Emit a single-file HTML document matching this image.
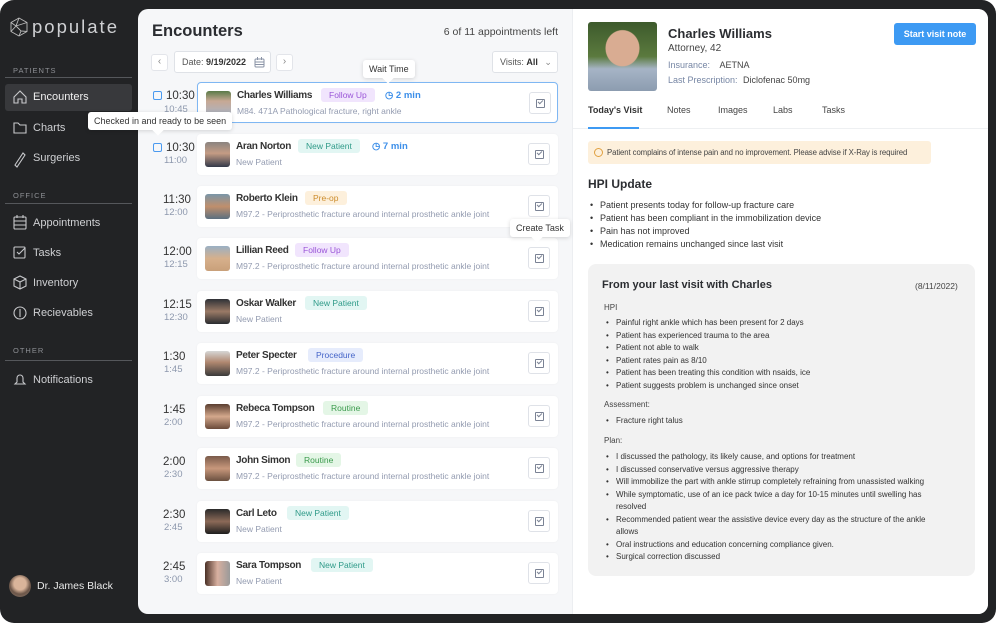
<!DOCTYPE html>
<html><head><meta charset="utf-8"><style>
*{margin:0;padding:0;box-sizing:border-box}
body{width:996px;height:623px;background:#fff;font-family:"Liberation Sans",sans-serif;position:relative;overflow:hidden}
.frame{position:absolute;left:0;top:0;width:996px;height:623px;background:#222325;border-radius:14px}
.a{position:absolute;white-space:nowrap}
.side{color:#cfd0d3;font-size:11px}
.sec{color:#8d8f94;font-size:7.5px;letter-spacing:1px}
.line{position:absolute;left:5px;width:127px;height:1px;background:#55575b}
.main{position:absolute;left:138px;top:9px;width:850px;height:605px;background:#f6f7f9;border-radius:10px;overflow:hidden}
.right{position:absolute;left:434px;top:0;width:416px;height:605px;background:#fff;border-left:1px solid #eceef1}
.card{position:absolute;left:59px;width:361px;height:41px;background:#fff;border-radius:4px;box-shadow:0 0 2px rgba(0,0,0,.04)}
.t1{position:absolute;left:25px;font-size:11.5px;color:#333}
.t2{position:absolute;left:26px;font-size:9.5px;color:#8d98ad}
.av{position:absolute;left:8px;top:8px;width:25px;height:25px;border-radius:3px}
.nm{position:absolute;left:39px;top:7px;font-size:10px;font-weight:bold;color:#333;letter-spacing:-0.3px;white-space:nowrap}
.sub{position:absolute;left:39px;top:23px;font-size:8.5px;color:#939bb0;white-space:nowrap}
.tag{position:absolute;top:5px;font-size:8.5px;padding:2px 8px;border-radius:3px;white-space:nowrap}
.fu{background:#f1e5fd;color:#9a55d8}.np{background:#e2f6f3;color:#2e9a88}.po{background:#fdf0dc;color:#cc8c2c}.pr{background:#e6ecfc;color:#4464c8}.rt{background:#e4f6e6;color:#3a9a4c}
.btn{position:absolute;left:331px;top:9px;width:22px;height:22px;border:1px solid #dfe2e8;border-radius:3px;background:#fff}
.btn:after{content:"";position:absolute;left:6px;top:6px;width:7px;height:7px;border:1px solid #7a8294;border-radius:1px}
.btn:before{content:"";position:absolute;left:8px;top:7px;width:4px;height:2px;border-left:1px solid #7a8294;border-bottom:1px solid #7a8294;transform:rotate(-45deg);z-index:1}
.tip{position:absolute;background:#fff;font-size:9px;color:#333;padding:4px 6px;border-radius:3px;box-shadow:0 1px 4px rgba(0,0,0,.15);white-space:nowrap;z-index:5}
.tip i{position:absolute;bottom:-4px;width:8px;height:8px;background:#fff;transform:rotate(45deg)}
.chk{position:absolute;left:15px;width:9px;height:9px;border:1px solid #4a9af0;border-radius:2px}
ul{list-style:none}
.bl li{position:relative;padding-left:12px}
.bl li:before{content:"•";position:absolute;left:2px}
</style></head><body>
<div class="frame"></div>
<svg class="a" style="left:9px;top:17px" width="20" height="20" viewBox="0 0 20 20" fill="none" stroke="#bbb" stroke-width="0.9"><polygon points="10,1 18,5.5 18,14.5 10,19 2,14.5 2,5.5"/><path d="M10 1 7 9 2 14.5M7 9l11-3.5M7 9l5 5 6 .5M12 14l-2 5M7 9 2 5.5"/></svg>
<div class="a" style="left:32px;top:16px;font-size:18.5px;color:#cfd0d3;letter-spacing:2px">populate</div>
<div class="a sec" style="left:13px;top:66px">PATIENTS</div><div class="line" style="top:77px"></div>
<div class="a" style="left:5px;top:84px;width:127px;height:27px;background:#38393c;border-radius:3px"></div>
<div class="a side" style="left:33px;top:91px;color:#f0f0f0">Encounters</div>
<div class="a side" style="left:33px;top:122px">Charts</div>
<div class="a side" style="left:33px;top:152px">Surgeries</div>
<div class="a sec" style="left:13px;top:191px">OFFICE</div><div class="line" style="top:203px"></div>
<div class="a side" style="left:33px;top:217px">Appointments</div>
<div class="a side" style="left:33px;top:247px">Tasks</div>
<div class="a side" style="left:33px;top:277px">Inventory</div>
<div class="a side" style="left:33px;top:307px">Recievables</div>
<div class="a sec" style="left:13px;top:346px">OTHER</div><div class="line" style="top:360px"></div>
<div class="a side" style="left:33px;top:374px">Notifications</div>
<svg class="a" style="left:12px;top:88px" width="16" height="130" fill="none" stroke="#c8c9cc" stroke-width="1.1">
<path d="M2 9 8 3l6 6v6H10v-4H6v4H2z"/>
<path d="M2 35h4l2 2h6v8H2z"/>
<path d="M3 77 11 65l2 2-8 12z"/>
</svg>
<svg class="a" style="left:12px;top:215px" width="16" height="170" fill="none" stroke="#c8c9cc" stroke-width="1.1">
<rect x="2" y="2" width="12" height="12" rx="1"/><path d="M2 6h12M2 10h12M5 0v3M11 0v3"/>
<rect x="2" y="32" width="11" height="11" rx="1"/><path d="M5 37l2 2 6-6"/>
<path d="M2 64l6-3 6 3v7l-6 3-6-3zM8 67v7M2 64l6 3 6-3"/>
<circle cx="8" cy="98" r="6"/><path d="M8 94v8"/>
<path d="M3 169h10l-2-2v-4a3 3 0 0 0-6 0v4z"/>
</svg>
<div class="a" style="left:9px;top:575px;width:22px;height:22px;border-radius:50%;background:radial-gradient(circle at 50% 40%,#d9b49a 0 35%,#6b5548 60%,#8e7c70)"></div>
<div class="a side" style="left:37px;top:580px;color:#e8e8e8;font-size:10.5px">Dr. James Black</div>

<div class="main">
<div class="a" style="left:14px;top:13px;font-size:16.5px;font-weight:bold;color:#2b2d31">Encounters</div>
<div class="a" style="right:430px;top:17px;font-size:10.5px;color:#444">6 of 11 appointments left</div>
<div class="a" style="left:13px;top:45px;width:17px;height:17px;border:1px solid #e3e5ea;background:#fff;border-radius:3px;font-size:10px;color:#888;text-align:center;line-height:14px">‹</div>
<div class="a" style="left:36px;top:42px;width:97px;height:22px;border:1px solid #dfe2e7;background:#fff;border-radius:3px;font-size:9px;color:#555;padding:5px 0 0 7px">Date: <b style="color:#333">9/19/2022</b></div>
<svg class="a" style="left:116px;top:48px" width="11" height="11" fill="none" stroke="#8a93a6"><rect x="1" y="2" width="9" height="8" rx="1"/><path d="M1 5h9M1 7.5h9M3.5 0v3M7.5 0v3"/></svg>
<div class="a" style="left:138px;top:45px;width:17px;height:17px;border:1px solid #e3e5ea;background:#fff;border-radius:3px;font-size:10px;color:#888;text-align:center;line-height:14px">›</div>
<div class="a" style="left:354px;top:42px;width:66px;height:22px;border:1px solid #dfe2e7;background:#fff;border-radius:3px;font-size:9px;color:#555;padding:5px 0 0 7px">Visits: <b style="color:#333">All</b> <span style="color:#888;margin-left:4px">⌄</span></div>

<div class="chk" style="top:82px"></div><div class="t1" style="top:81px;left:28px">10:30</div><div class="t2" style="top:95px">10:45</div>
<div class="card" style="top:73px;border:1px solid #7fb7f3"><div class="av" style="background:linear-gradient(#5a7a48,#c7a894 40%,#a8b6c8)"></div><div class="nm">Charles Williams</div><div class="tag fu" style="left:123px">Follow Up</div><div class="a" style="left:187px;top:7px;font-size:9.5px;color:#3d8fe9;font-weight:bold">◷ 2 min</div><div class="sub">M84. 471A Pathological fracture, right ankle</div><div class="btn"></div></div>
<div class="chk" style="top:134px"></div><div class="t1" style="top:133px;left:28px">10:30</div><div class="t2" style="top:146px">11:00</div>
<div class="card" style="top:125px"><div class="av" style="background:linear-gradient(#8a8480,#c49c84 45%,#33394a)"></div><div class="nm">Aran Norton</div><div class="tag np" style="left:101px">New Patient</div><div class="a" style="left:175px;top:7px;font-size:9.5px;color:#3d8fe9;font-weight:bold">◷ 7 min</div><div class="sub">New Patient</div><div class="btn"></div></div>

<div class="t1" style="top:185px">11:30</div><div class="t2" style="top:198px">12:00</div>
<div class="card" style="top:177px"><div class="av" style="background:linear-gradient(#7a96a8,#c08f6c 50%,#5b6f80)"></div><div class="nm">Roberto Klein</div><div class="tag po" style="left:108px">Pre-op</div><div class="sub">M97.2 - Periprosthetic fracture around internal prosthetic ankle joint</div><div class="btn"></div></div>
<div class="t1" style="top:237px">12:00</div><div class="t2" style="top:250px">12:15</div>
<div class="card" style="top:229px"><div class="av" style="background:linear-gradient(#9ab0c4,#d6b08c 50%,#c9a07a)"></div><div class="nm">Lillian Reed</div><div class="tag fu" style="left:98px">Follow Up</div><div class="sub">M97.2 - Periprosthetic fracture around internal prosthetic ankle joint</div><div class="btn"></div></div>
<div class="t1" style="top:290px">12:15</div><div class="t2" style="top:303px">12:30</div>
<div class="card" style="top:282px"><div class="av" style="background:linear-gradient(#2f3136,#9a7a66 50%,#2a2c30)"></div><div class="nm">Oskar Walker</div><div class="tag np" style="left:108px">New Patient</div><div class="sub">New Patient</div><div class="btn"></div></div>
<div class="t1" style="top:342px">1:30</div><div class="t2" style="top:355px">1:45</div>
<div class="card" style="top:334px"><div class="av" style="background:linear-gradient(#d6d6d6,#b08870 45%,#3a3a3a)"></div><div class="nm">Peter Specter</div><div class="tag pr" style="left:111px">Procedure</div><div class="sub">M97.2 - Periprosthetic fracture around internal prosthetic ankle joint</div><div class="btn"></div></div>
<div class="t1" style="top:395px">1:45</div><div class="t2" style="top:408px">2:00</div>
<div class="card" style="top:387px"><div class="av" style="background:linear-gradient(#5a3e30,#d4a88c 50%,#6a4a3a)"></div><div class="nm">Rebeca Tompson</div><div class="tag rt" style="left:126px">Routine</div><div class="sub">M97.2 - Periprosthetic fracture around internal prosthetic ankle joint</div><div class="btn"></div></div>
<div class="t1" style="top:447px">2:00</div><div class="t2" style="top:460px">2:30</div>
<div class="card" style="top:439px"><div class="av" style="background:linear-gradient(#7a5a4a,#c8987c 50%,#6a5040)"></div><div class="nm">John Simon</div><div class="tag rt" style="left:99px">Routine</div><div class="sub">M97.2 - Periprosthetic fracture around internal prosthetic ankle joint</div><div class="btn"></div></div>
<div class="t1" style="top:500px">2:30</div><div class="t2" style="top:513px">2:45</div>
<div class="card" style="top:492px"><div class="av" style="background:linear-gradient(#2a2a2a,#8c6a58 50%,#1e1e1e)"></div><div class="nm">Carl Leto</div><div class="tag np" style="left:90px">New Patient</div><div class="sub">New Patient</div><div class="btn"></div></div>
<div class="t1" style="top:552px">2:45</div><div class="t2" style="top:565px">3:00</div>
<div class="card" style="top:544px"><div class="av" style="background:linear-gradient(90deg,#4a3026,#d8b0a0 50%,#9a9a9a)"></div><div class="nm">Sara Tompson</div><div class="tag np" style="left:114px">New Patient</div><div class="sub">New Patient</div><div class="btn"></div></div>

<div class="tip" style="left:225px;top:51px">Wait Time<i style="left:21px"></i></div>
<div class="tip" style="left:372px;top:210px">Create Task<i style="left:23px"></i></div>

<div class="right">
<div class="a" style="left:15px;top:13px;width:69px;height:69px;border-radius:3px;background:radial-gradient(ellipse 30% 32% at 50% 38%,#d9ac92 0 80%,transparent 84%),linear-gradient(180deg,#3d5a2c 0,#5b7a3e 50%,#a6b4c6 68%,#8c9cb0)"></div>
<div class="a" style="left:95px;top:17px;font-size:13px;font-weight:bold;color:#2b2d31">Charles Williams</div>
<div class="a" style="left:95px;top:34px;font-size:10px;color:#444">Attorney, 42</div>
<div class="a" style="left:95px;top:51px;font-size:9px;color:#7686a4">Insurance: <span style="color:#444;margin-left:7px">AETNA</span></div>
<div class="a" style="left:95px;top:66px;font-size:9px;color:#7686a4">Last Prescription: <span style="color:#444;margin-left:3px">Diclofenac 50mg</span></div>
<div class="a" style="left:321px;top:14px;width:82px;height:22px;background:#3d9af3;border-radius:3px;color:#fff;font-size:9px;font-weight:bold;text-align:center;line-height:22px">Start visit note</div>
<div class="a" style="left:15px;top:96px;font-size:9px;color:#333;font-weight:bold">Today's Visit</div>
<div class="a" style="left:94px;top:96px;font-size:9px;color:#444">Notes</div>
<div class="a" style="left:145px;top:96px;font-size:9px;color:#444">Images</div>
<div class="a" style="left:200px;top:96px;font-size:9px;color:#444">Labs</div>
<div class="a" style="left:249px;top:96px;font-size:9px;color:#444">Tasks</div>
<div class="a" style="left:0;top:119px;width:416px;height:1px;background:#eef0f2"></div>
<div class="a" style="left:15px;top:118px;width:51px;height:2px;background:#3d9af3"></div>
<div class="a" style="left:15px;top:132px;width:343px;height:23px;background:#fdf0dc;border-radius:3px;font-size:7.8px;color:#444;padding:7px 0 0 19px;letter-spacing:-0.1px">Patient complains of intense pain and no improvement. Please advise if X-Ray is required</div>
<div class="a" style="left:21px;top:139px;width:9px;height:9px;border:1px solid #e0a040;border-radius:50%"></div>
<div class="a" style="left:15px;top:168px;font-size:12px;font-weight:bold;color:#2b2d31">HPI Update</div>
<ul class="a bl" style="left:15px;top:190px;font-size:9px;color:#333;line-height:13px"><li>Patient presents today for follow-up fracture care</li><li>Patient has been compliant in the immobilization device</li><li>Pain has not improved</li><li>Medication remains unchanged since last visit</li></ul>
<div class="a" style="left:15px;top:255px;width:387px;height:312px;background:#f2f2f2;border-radius:8px"></div>
<div class="a" style="left:29px;top:270px;font-size:11px;font-weight:bold;color:#2b2d31">From your last visit with Charles</div>
<div class="a" style="left:342px;top:272px;font-size:8.5px;color:#444">(8/11/2022)</div>
<div class="a" style="left:31px;top:294px;font-size:8px;color:#444">HPI</div>
<ul class="a bl" style="left:31px;top:308px;font-size:8px;color:#333;line-height:12.5px"><li>Painful right ankle which has been present for 2 days</li><li>Patient has experienced trauma to the area</li><li>Patient not able to walk</li><li>Patient rates pain as 8/10</li><li>Patient has been treating this condition with nsaids, ice</li><li>Patient suggests problem is unchanged since onset</li></ul>
<div class="a" style="left:31px;top:391px;font-size:8px;color:#444">Assessment:</div>
<ul class="a bl" style="left:31px;top:406px;font-size:8px;color:#333;line-height:12.5px"><li>Fracture right talus</li></ul>
<div class="a" style="left:31px;top:427px;font-size:8px;color:#444">Plan:</div>
<ul class="a bl" style="left:31px;top:442px;width:334px;white-space:normal;font-size:8px;color:#333;line-height:12.5px"><li>I discussed the pathology, its likely cause, and options for treatment</li><li>I discussed conservative versus aggressive therapy</li><li style="white-space:nowrap">Will immobilize the part with ankle stirrup completely refraining from unassisted walking</li><li>While symptomatic, use of an ice pack twice a day for 10-15 minutes until swelling has resolved</li><li>Recommended patient wear the assistive device every day as the structure of the ankle allows</li><li>Oral instructions and education concerning compliance given.</li><li>Surgical correction discussed</li></ul>
</div>
</div>
<div class="tip" style="left:88px;top:112px">Checked in and ready to be seen<i style="left:66px"></i></div>
</body></html>
